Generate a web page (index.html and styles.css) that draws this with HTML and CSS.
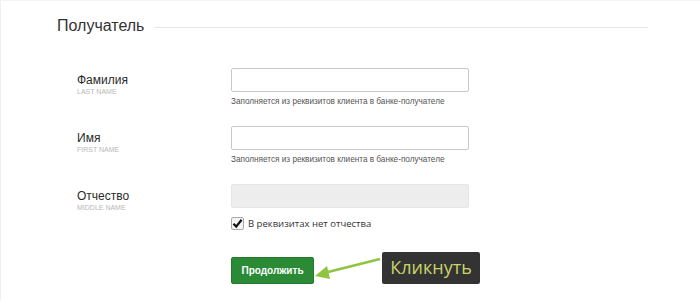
FILE: index.html
```html
<!DOCTYPE html>
<html lang="ru">
    <head>
        <meta charset="UTF-8">
        <title>Получатель</title>
        <link rel="stylesheet" href="styles.css">
    </head>
    <body>
    <div class="page">
        <div class="section-head">
            <h2 class="section-title">Получатель</h2>
            <div class="section-line"></div>
        </div>

        <div class="field">
            <div class="field-label">
                <div class="label-name">Фамилия</div>
                <div class="label-sub">LAST NAME</div>
            </div>
            <div class="field-body">
                <input type="text" class="text-input">
                <div class="field-hint">Заполняется из реквизитов клиента в банке-получателе</div>
            </div>
        </div>

        <div class="field">
            <div class="field-label">
                <div class="label-name">Имя</div>
                <div class="label-sub">FIRST NAME</div>
            </div>
            <div class="field-body">
                <input type="text" class="text-input">
                <div class="field-hint">Заполняется из реквизитов клиента в банке-получателе</div>
            </div>
        </div>

        <div class="field">
            <div class="field-label">
                <div class="label-name">Отчество</div>
                <div class="label-sub">MIDDLE NAME</div>
            </div>
            <div class="field-body">
                <input type="text" class="text-input" disabled>
                <label class="check">
                    <span class="check-box">
                        <svg width="11" height="11" viewBox="0 0 11 11"><path d="M1.5 5.8 L4.2 8.6 L9.6 1.8" fill="none" stroke="#111" stroke-width="2.2"/></svg>
                    </span>
                    В реквизитах нет отчества
                </label>
            </div>
        </div>

        <div class="actions">
            <button class="btn-next">Продолжить</button>
            <svg class="arrow" width="68" height="30" viewBox="0 0 68 30">
                <line x1="66" y1="9" x2="10" y2="23" stroke="#8fc540" stroke-width="2.5"/>
                <polygon points="1,26 13,16 16,29" fill="#8fc540"/>
            </svg>
            <div class="callout">Кликнуть</div>
        </div>
    </div>
    </body>
</html>
```

FILE: styles.css
```css
body {
    margin: 0;
    background: #fff;
    font-family: "Liberation Sans", Arial, sans-serif;
    color: #333;
}
.page {
    height: 300px;
    border-top: 1px solid #f4f4f4;
    border-left: 1px solid #f0f0f0;
    padding: 15px 52px 0 56px;
    box-sizing: border-box;
}
.section-head {
    display: flex;
    align-items: center;
}
.section-title {
    margin: 0;
    font-size: 16px;
    line-height: 20px;
    font-weight: normal;
    color: #333;
}
.section-line {
    flex: 1;
    margin: 3px 0 0 10px;
    border-top: 1px solid #e6e6e6;
}

.field {
    display: grid;
    grid-template-columns: 154px 238px;
    margin-left: 20px;
}
.field + .field {
    margin-top: 19px;
}
.section-head + .field {
    margin-top: 32px;
}
.field-label {
    padding-top: 5px;
}
.label-name {
    font-size: 12px;
    line-height: 14px;
    color: #2a2a2a;
}
.label-sub {
    font-size: 7px;
    line-height: 9px;
    color: #b8b8b8;
}
.text-input {
    display: block;
    width: 238px;
    height: 24px;
    margin: 0;
    box-sizing: border-box;
    border: 1px solid #c8c8c8;
    border-radius: 2px;
    background: #fff;
}
.text-input:disabled {
    background: #ededed;
    border-color: #e6e6e6;
}
.field-hint {
    margin-top: 4px;
    font-size: 8.2px;
    line-height: 11px;
    color: #555;
}
.check {
    display: flex;
    align-items: center;
    margin-top: 9px;
    font-family: "Open Sans", sans-serif;
    font-size: 9.5px;
    color: #333;
}
.check-box {
    width: 11px;
    height: 11px;
    border: 1px solid #a9a9a9;
    border-radius: 2px;
    background: #f4f4f4;
    margin-right: 4px;
    display: flex;
}

.actions {
    display: flex;
    align-items: flex-end;
    margin: 20px 0 0 174px;
}
.btn-next {
    width: 83px;
    height: 27px;
    margin: 0;
    padding: 0;
    background: #2b8a36;
    border: 1px solid #237a2d;
    border-radius: 2px;
    color: #fff;
    font-family: "Liberation Sans", Arial, sans-serif;
    font-size: 10px;
    font-weight: bold;
}
.arrow {
    display: block;
    margin-bottom: 4px;
}
.callout {
    width: 98px;
    height: 32px;
    line-height: 31px;
    background: #333;
    border-radius: 2px;
    color: #c8d46a;
    font-family: "Open Sans", sans-serif;
    font-size: 18px;
    text-align: center;
}
```
